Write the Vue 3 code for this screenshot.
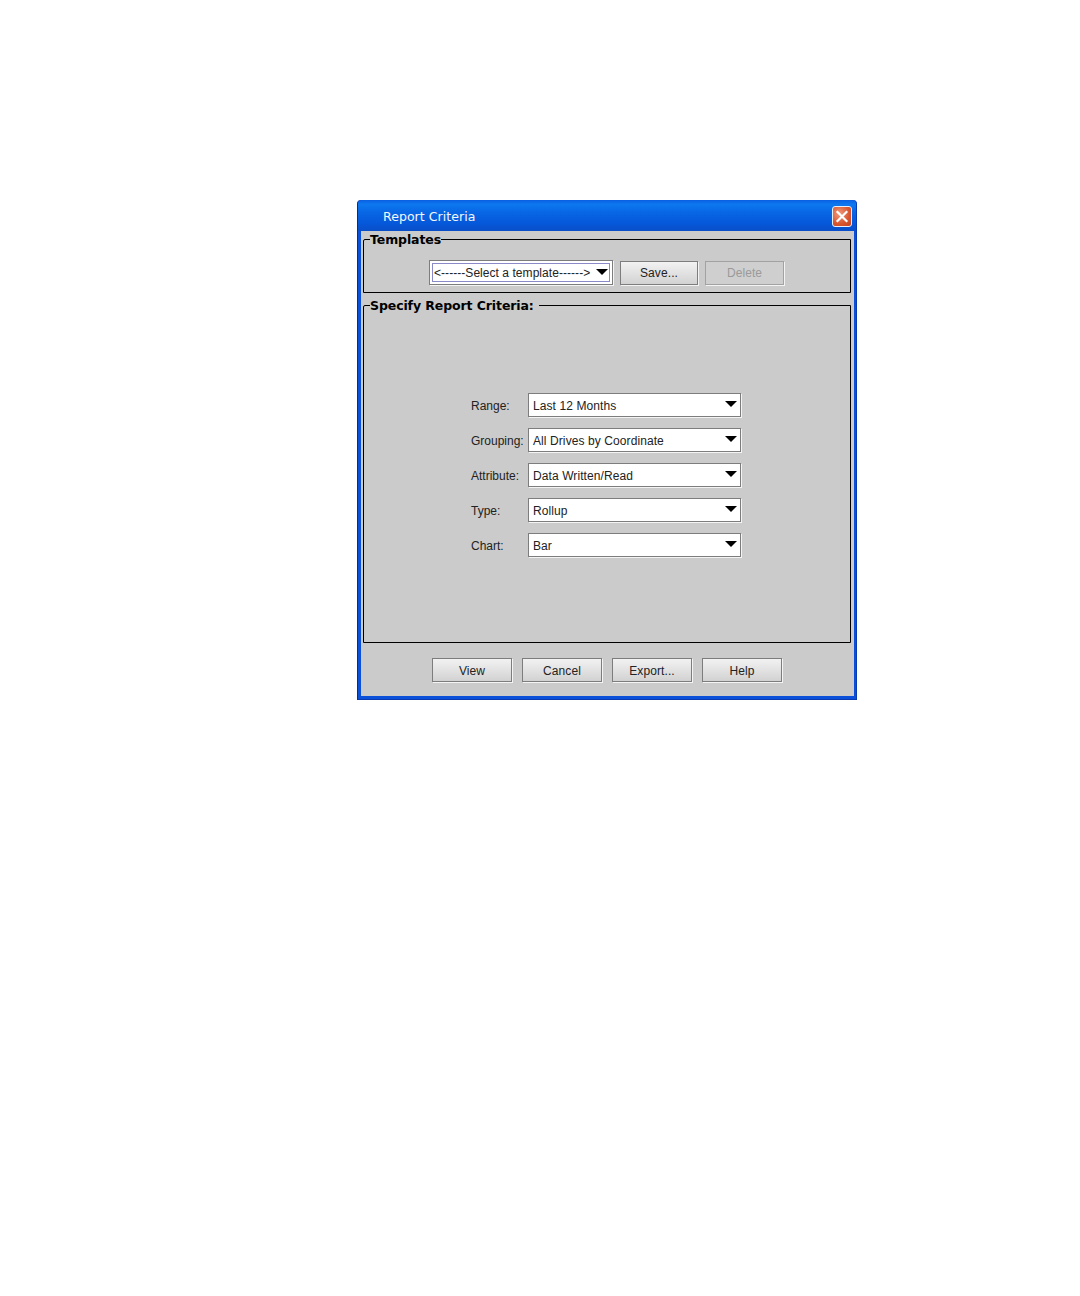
<script setup>
const rows = [
  { label: 'Range:', value: 'Last 12 Months' },
  { label: 'Grouping:', value: 'All Drives by Coordinate' },
  { label: 'Attribute:', value: 'Data Written/Read' },
  { label: 'Type:', value: 'Rollup' },
  { label: 'Chart:', value: 'Bar' }
]
const actions = ['View', 'Cancel', 'Export...', 'Help']
</script>

<template>
  <div class="page">
    <div class="window">
      <div class="titlebar">
        <span class="title">Report Criteria</span>
        <span class="close">
          <svg width="18" height="19" viewBox="0 0 18 19">
            <path d="M4.5 5 L13.5 14 M13.5 5 L4.5 14" stroke="#fff" stroke-width="2.2" stroke-linecap="square" fill="none" />
          </svg>
        </span>
      </div>
      <div class="body">
        <fieldset class="group templates">
          <legend>Templates</legend>
          <div class="template-row">
            <div class="combo combo-template">
              <span class="combo-inner">
                <span class="combo-text">&lt;------Select a template------&gt;</span>
                <i class="arrow"></i>
              </span>
            </div>
            <button class="btn save">Save...</button>
            <button class="btn disabled">Delete</button>
          </div>
        </fieldset>
        <fieldset class="group criteria">
          <legend class="legend-gap">Specify Report Criteria:</legend>
          <div class="rows">
            <div v-for="r in rows" :key="r.label" class="row">
              <span class="label">{{ r.label }}</span>
              <div class="combo combo-row">
                <span class="combo-text row-text">{{ r.value }}</span>
                <i class="arrow"></i>
              </div>
            </div>
          </div>
        </fieldset>
        <div class="actions">
          <button v-for="a in actions" :key="a" class="btn action">{{ a }}</button>
        </div>
      </div>
    </div>
  </div>
</template>

<style>
html, body { background: #fff; }
</style>

<style scoped>
.page {
  height: 1296px;
  box-sizing: border-box;
  padding: 200px 0 0 357px;
  font-family: "Liberation Sans", Arial, sans-serif;
}
.window {
  width: 500px;
  height: 500px;
  box-sizing: border-box;
  display: flex;
  flex-direction: column;
  background: #0a50d8;
  border-radius: 4px 4px 0 0;
  border-left: 1px solid #0a2a90;
  border-bottom: 1px solid #0a3ab0;
  border-right: 1px solid #0a3ab0;
}
.titlebar {
  height: 31px;
  flex: none;
  display: flex;
  align-items: center;
  justify-content: space-between;
  padding: 2px 4px 0 25px;
  box-sizing: border-box;
  border-radius: 4px 4px 0 0;
  background: linear-gradient(#0a5fe0 0%, #0d78f0 14%, #0866e4 40%, #0558da 75%, #0a4ec8 100%);
}
.title {
  color: #f4f8ff;
  font-family: "DejaVu Sans", sans-serif;
  font-size: 12.5px;
  letter-spacing: 0.05px;
}
.close {
  width: 20px;
  height: 21px;
  box-sizing: border-box;
  display: flex;
  align-items: center;
  justify-content: center;
  background: radial-gradient(circle at 35% 35%, #ef9b7c, #d9552e 60%, #c4431f);
  border: 1px solid #e8eefc;
  border-radius: 3px;
}
.body {
  flex: 1;
  margin: 0 2px 3px 3px;
  background: #cbcbcb;
  display: flex;
  flex-direction: column;
  padding: 1px 3px 0 2px;
  min-height: 0;
}
.group {
  margin: 0;
  border: 1px solid #000;
  border-radius: 2px 0 0 0;
  padding: 0;
  min-width: 0;
  box-sizing: border-box;
}
legend {
  font-family: "DejaVu Sans", sans-serif;
  font-size: 12.5px;
  font-weight: 700;
  letter-spacing: -0.1px;
  color: #000;
  padding: 0;
  margin-left: 6px;
  line-height: 15px;
}
.legend-gap { padding-right: 5px; }
.templates {
  height: 61px;
  flex: none;
}
.template-row {
  display: flex;
  align-items: flex-start;
  padding: 13px 0 0 65px;
  gap: 7px;
}
.criteria {
  height: 345px;
  flex: none;
  margin-top: 5px;
}
.combo {
  box-sizing: border-box;
  background: #fff;
  border: 1px solid #7d7d7d;
  box-shadow: 1px 1px 0 #f4f4f4;
  display: flex;
  align-items: center;
  font-size: 12px;
  letter-spacing: 0.09px;
  color: #222;
}
.combo-template {
  width: 184px;
  height: 25px;
  padding: 2px;
  letter-spacing: 0.05px;
}
.combo-inner {
  flex: 1;
  height: 100%;
  border: 1px solid #8a8ac8;
  display: flex;
  align-items: center;
  justify-content: space-between;
  padding: 0 1px 0 1px;
  box-sizing: border-box;
}
.combo-row {
  width: 213px;
  height: 24px;
  justify-content: space-between;
  padding: 0 3px 0 4px;
}
.row-text { padding-top: 2px; }
.arrow {
  width: 0;
  height: 0;
  border-left: 6px solid transparent;
  border-right: 6px solid transparent;
  border-top: 6px solid #000;
  margin-top: -2px;
}
.btn {
  box-sizing: border-box;
  height: 24px;
  width: 79px;
  padding: 0;
  font-family: "Liberation Sans", Arial, sans-serif;
  font-size: 12px;
  letter-spacing: 0.09px;
  color: #222;
  background: linear-gradient(#f2f2f2, #d2d2d2);
  border: 1px solid #7d7d7d;
  box-shadow: 1px 1px 0 #f4f4f4;
}
.save {
  margin-top: 1px;
  width: 78px;
}
.disabled {
  margin-top: 1px;
  color: #9a9a9a;
  background: #cfcfcf;
  border-color: #a2a2a2;
}
.rows {
  margin: 80px 0 0 107px;
  display: flex;
  flex-direction: column;
  gap: 11px;
}
.row {
  display: flex;
  align-items: center;
}
.label {
  width: 57px;
  padding-top: 2px;
  font-size: 12px;
  color: #222;
}
.actions {
  display: flex;
  gap: 10px;
  padding: 15px 0 0 69px;
}
.action {
  width: 80px;
  padding-top: 2px;
}
</style>
